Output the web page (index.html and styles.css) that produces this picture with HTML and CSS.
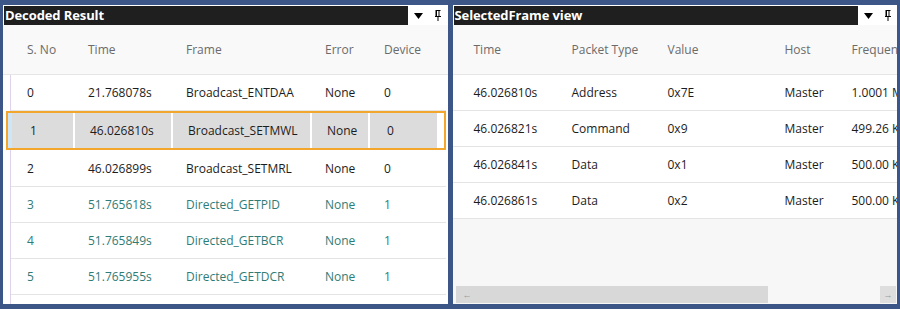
FILE: index.html
```html
<!DOCTYPE html>
<html lang="en">
<head>
    <meta charset="UTF-8">
    <title>Decoder</title>
    <link rel="stylesheet" href="styles.css">
</head>
<body>
    <div class="workspace">
        <!-- Decoded result panel -->
        <div class="panel panel-left">
            <div class="panel-title">
                <span class="title-text">Decoded Result</span>
                <span class="title-tools">
                    <svg class="icon-drop" width="9" height="6" viewBox="0 0 9 6"><path d="M0 0H9L4.5 6Z" fill="#000"/></svg>
                    <svg class="icon-pin" width="8" height="11" viewBox="0 0 8 11"><path d="M1.5 0H6.5V1H5.5V6H7V7H4.5V11H3.5V7H1V6H1.5Z" fill="#000"/><rect x="3" y="1" width="1.5" height="5" fill="#fff"/></svg>
                </span>
            </div>
            <div class="grid-head cols-left">
                <span>S. No</span><span>Time</span><span>Frame</span><span>Error</span><span>Device</span>
            </div>
            <div class="grid-body body-left">
                <div class="row cols-left">
                    <span>0</span><span>21.768078s</span><span>Broadcast_ENTDAA</span><span>None</span><span>0</span>
                </div>
                <div class="row-selected">
                    <span>1</span><span>46.026810s</span><span>Broadcast_SETMWL</span><span>None</span><span>0</span>
                </div>
                <div class="row cols-left">
                    <span>2</span><span>46.026899s</span><span>Broadcast_SETMRL</span><span>None</span><span>0</span>
                </div>
                <div class="row cols-left directed">
                    <span>3</span><span>51.765618s</span><span>Directed_GETPID</span><span>None</span><span>1</span>
                </div>
                <div class="row cols-left directed">
                    <span>4</span><span>51.765849s</span><span>Directed_GETBCR</span><span>None</span><span>1</span>
                </div>
                <div class="row cols-left directed">
                    <span>5</span><span>51.765955s</span><span>Directed_GETDCR</span><span>None</span><span>1</span>
                </div>
            </div>
        </div>

        <!-- Selected frame panel -->
        <div class="panel panel-right">
            <div class="panel-title">
                <span class="title-text">SelectedFrame view</span>
                <span class="title-tools">
                    <svg class="icon-drop" width="9" height="6" viewBox="0 0 9 6"><path d="M0 0H9L4.5 6Z" fill="#000"/></svg>
                    <svg class="icon-pin" width="8" height="11" viewBox="0 0 8 11"><path d="M1.5 0H6.5V1H5.5V6H7V7H4.5V11H3.5V7H1V6H1.5Z" fill="#000"/><rect x="3" y="1" width="1.5" height="5" fill="#fff"/></svg>
                </span>
            </div>
            <div class="grid-head cols-right">
                <span>Time</span><span>Packet Type</span><span>Value</span><span>Host</span><span>Frequency</span>
            </div>
            <div class="grid-body body-right">
                <div class="row cols-right">
                    <span>46.026810s</span><span>Address</span><span>0x7E</span><span>Master</span><span>1.0001 MHz</span>
                </div>
                <div class="row cols-right">
                    <span>46.026821s</span><span>Command</span><span>0x9</span><span>Master</span><span>499.26 KHz</span>
                </div>
                <div class="row cols-right">
                    <span>46.026841s</span><span>Data</span><span>0x1</span><span>Master</span><span>500.00 KHz</span>
                </div>
                <div class="row cols-right">
                    <span>46.026861s</span><span>Data</span><span>0x2</span><span>Master</span><span>500.00 KHz</span>
                </div>
            </div>
            <div class="hscroll">
                <span class="scroll-thumb">&#8592;</span>
                <span class="scroll-btn">&#8594;</span>
            </div>
        </div>
    </div>
</body>
</html>
```

FILE: styles.css
```css
body {
    margin: 0;
    background: #3c5688;
    font-family: 'Open Sans', 'Noto Sans', sans-serif;
    font-size: 12px;
    color: #1c1c1c;
}

.workspace {
    display: flex;
    gap: 5px;
    height: 309px;
    box-sizing: border-box;
    padding: 5px 3px 5px 3px;
}

.panel {
    flex: 1;
    display: flex;
    flex-direction: column;
    background: #fff;
    overflow: hidden;
    min-width: 0;
}

.panel-right {
    background: #f7f7f7;
}

.panel-title {
    display: flex;
    height: 19px;
    padding-top: 1px;
    background: #fff;
}

.title-text {
    width: 403px;
    margin-left: 1px;
    background: #1f1f1f;
    color: #fff;
    font-weight: 700;
    font-size: 13px;
    line-height: 18px;
    padding-left: 1px;
    letter-spacing: -0.1px;
}

.title-tools {
    display: flex;
    align-items: center;
    gap: 11px;
    padding-left: 6px;
}

.icon-drop {
    margin-top: 1px;
}

.grid-head {
    display: grid;
    height: 49px;
    align-items: center;
    background: #f9f9f9;
    color: #6b6b6b;
    border-bottom: 1px solid #e6e6e6;
}

.cols-left {
    grid-template-columns: 61px 98px 139px 59px 1fr;
    padding-left: 24px;
}

.cols-right {
    grid-template-columns: 98px 96px 117px 67px 1fr;
    padding-left: 21px;
    white-space: nowrap;
}

.grid-body {
    display: flex;
    flex-direction: column;
}

.body-left {
    margin-left: 7px;
    margin-right: 2px;
    border-left: 1px solid #ddd3ec;
    flex: 1;
}

.body-left .cols-left {
    padding-left: 16px;
}

.body-right {
    background: #fff;
}

.row {
    display: grid;
    height: 35px;
    align-items: center;
    border-bottom: 1px solid #e4e4e4;
}

.directed {
    color: #2f7c77;
}

.row-selected {
    display: grid;
    grid-template-columns: 65px 96px 137px 56px 67px;
    column-gap: 2px;
    height: 35px;
    margin: 0 0 1px -5px;
    border: 2px solid #f3a62c;
    background: #fff;
}

.row-selected span {
    background: #dcdcdc;
    line-height: 35px;
    padding-left: 15px;
}

.row-selected span:first-child {
    border-left: 4px solid #cfe6f6;
    padding-left: 18px;
}

.row-selected span:last-child {
    padding-left: 17px;
}

.hscroll {
    display: flex;
    align-items: center;
    height: 17px;
    margin: auto 1px 1px 3px;
}

.scroll-thumb {
    width: 305px;
    height: 17px;
    line-height: 17px;
    padding-left: 7px;
    background: #d8d8d8;
    font-size: 9px;
    color: #9a9a9a;
}

.scroll-btn {
    width: 16px;
    height: 17px;
    margin-left: auto;
    line-height: 17px;
    text-align: center;
    font-size: 9px;
    color: #9a9a9a;
    background: #dedede;
}
```
